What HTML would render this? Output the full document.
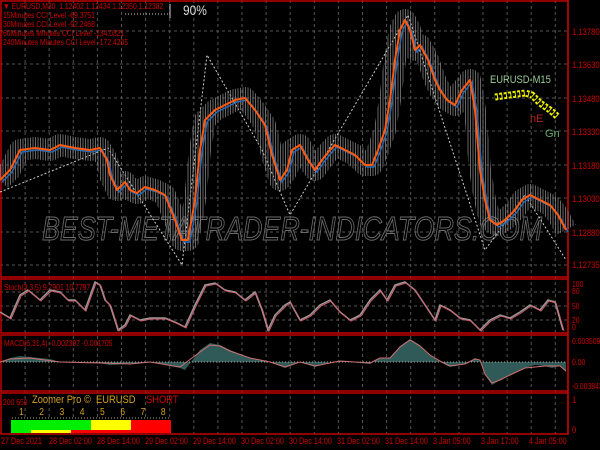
<!DOCTYPE html>
<html><head><style>
body{margin:0;width:600px;height:450px;background:#000;overflow:hidden;font-family:"Liberation Sans",sans-serif;position:relative}
.t{position:absolute;white-space:nowrap;font-size:9px;line-height:9px;transform:scaleX(.85);transform-origin:left top}
.r{color:#d00000}
.ax{position:absolute;left:572px;font-size:9px;color:#d00000;transform:scaleX(.85);transform-origin:left top;white-space:nowrap}
.tm{position:absolute;top:436px;font-size:9px;color:#d00000;white-space:nowrap;transform:scaleX(.8);transform-origin:left top}
</style></head><body>
<svg width="600" height="450" style="position:absolute;left:0;top:0">
<defs>
<pattern id="g" x="0.5" y="0" width="24.1" height="450" patternUnits="userSpaceOnUse">
<line x1="0.5" y1="0" x2="0.5" y2="450" stroke="#555" stroke-dasharray="3,3"/>
</pattern>
<pattern id="vp" x="0" y="0" width="2.5" height="10" patternUnits="userSpaceOnUse">
<rect x="0" y="0" width="1" height="10" fill="#888"/>
</pattern>
</defs>
<rect x="0" y="0" width="568" height="434" fill="url(#g)"/>
<g stroke="#555" stroke-dasharray="3,3">
<line x1="0" x2="568" y1="31" y2="31"/><line x1="0" x2="568" y1="64" y2="64"/>
<line x1="0" x2="568" y1="98" y2="98"/><line x1="0" x2="568" y1="131" y2="131"/>
<line x1="0" x2="568" y1="165" y2="165"/><line x1="0" x2="568" y1="198" y2="198"/>
<line x1="0" x2="568" y1="232" y2="232"/><line x1="0" x2="568" y1="265" y2="265"/>
<line x1="0" x2="568" y1="292" y2="292"/><line x1="0" x2="568" y1="306" y2="306"/><line x1="0" x2="568" y1="320" y2="320"/>
</g>
<g stroke="#c00000" stroke-width="1.5" fill="none">
<rect x="1" y="1" width="567" height="276"/>
<rect x="1" y="279" width="567" height="54"/>
<rect x="1" y="335" width="567" height="56"/>
<rect x="1" y="393" width="567" height="41"/>
<line x1="568" y1="0" x2="568" y2="434"/>
</g>
<text x="42" y="240" font-family="Liberation Sans" font-style="italic" font-size="33" fill="none" stroke="#6a6a6a" stroke-width="1" textLength="500" lengthAdjust="spacingAndGlyphs">BEST-METATRADER-INDICATORS.COM</text>
<polyline fill="none" stroke="#ccc" stroke-dasharray="2,2" points="0,192 108,148 182,265 207,55 262,150 290,215 408,15 485,250 525,195 566,260"/>
<polyline fill="none" stroke="url(#vp)" stroke-width="22" stroke-linejoin="round" opacity="0.75" points="0,180 10,170 20,150 35,148 50,150 60,145 75,148 90,150 100,148 107,160 110,175 117,190 125,182 130,190 137,193 145,187 155,190 165,195 175,220 182,240 188,240 195,200 200,150 205,120 215,110 225,105 235,100 245,98 255,110 265,125 272,155 280,180 287,170 292,150 300,145 308,160 315,170 322,160 330,150 335,145 345,150 355,155 365,165 372,165 378,150 385,130 390,100 395,60 400,30 405,20 410,30 415,50 420,45 428,60 435,80 440,90 447,100 455,105 462,90 470,80 475,110 480,170 485,200 490,220 497,225 505,220 515,210 522,200 530,195 540,200 550,205 558,215 566,230"/>
<polyline fill="none" stroke="#2a6ab0" stroke-width="1.5" transform="translate(2,2)" points="0,180 10,170 20,150 35,148 50,150 60,145 75,148 90,150 100,148 107,160 110,175 117,190 125,182 130,190 137,193 145,187 155,190 165,195 175,220 182,240 188,240 195,200 200,150 205,120 215,110 225,105 235,100 245,98 255,110 265,125 272,155 280,180 287,170 292,150 300,145 308,160 315,170 322,160 330,150 335,145 345,150 355,155 365,165 372,165 378,150 385,130 390,100 395,60 400,30 405,20 410,30 415,50 420,45 428,60 435,80 440,90 447,100 455,105 462,90 470,80 475,110 480,170 485,200 490,220 497,225 505,220 515,210 522,200 530,195 540,200 550,205 558,215 566,230"/>
<polyline fill="none" stroke="#ff5a10" stroke-width="2" stroke-linejoin="round" points="0,180 10,170 20,150 35,148 50,150 60,145 75,148 90,150 100,148 107,160 110,175 117,190 125,182 130,190 137,193 145,187 155,190 165,195 175,220 182,240 188,240 195,200 200,150 205,120 215,110 225,105 235,100 245,98 255,110 265,125 272,155 280,180 287,170 292,150 300,145 308,160 315,170 322,160 330,150 335,145 345,150 355,155 365,165 372,165 378,150 385,130 390,100 395,60 400,30 405,20 410,30 415,50 420,45 428,60 435,80 440,90 447,100 455,105 462,90 470,80 475,110 480,170 485,200 490,220 497,225 505,220 515,210 522,200 530,195 540,200 550,205 558,215 566,230"/>
<polyline fill="none" stroke="#ee0" stroke-width="7" stroke-dasharray="3,1.5" points="495,97 510,95 525,93 532,95 540,103 550,110 558,117"/>
<polyline fill="none" stroke="#000" stroke-width="3" stroke-dasharray="2,2.5" points="495,97 510,95 525,93 532,95 540,103 550,110 558,117"/>
<text x="530" y="122" font-size="11" fill="#b02020">nE</text>
<text x="545" y="137" font-size="11" fill="#6a6">Gn</text>
<line x1="125" y1="14" x2="168" y2="14" stroke="#ccc" stroke-dasharray="1,2"/>
<line x1="170" y1="4" x2="170" y2="18" stroke="#ccc"/>
<polyline fill="none" stroke="#999" stroke-width="1.5" points="0,312 10,318 20,295 28,290 40,300 50,290 60,292 68,300 75,300 85,310 95,282 100,285 105,300 110,305 118,330 125,325 130,315 140,320 150,318 165,318 175,322 185,327 195,305 205,285 215,283 225,290 235,292 245,300 255,292 262,310 268,330 275,315 285,305 290,302 300,320 310,315 320,305 330,300 340,312 350,320 360,315 370,300 380,290 387,300 395,285 405,282 415,290 425,305 435,320 440,305 450,310 460,318 470,320 480,330 490,320 500,315 510,318 520,312 530,305 540,310 548,300 555,302 563,330"/>
<polyline fill="none" stroke="#d06070" stroke-width="1" transform="translate(1,1)" points="0,312 10,318 20,295 28,290 40,300 50,290 60,292 68,300 75,300 85,310 95,282 100,285 105,300 110,305 118,330 125,325 130,315 140,320 150,318 165,318 175,322 185,327 195,305 205,285 215,283 225,290 235,292 245,300 255,292 262,310 268,330 275,315 285,305 290,302 300,320 310,315 320,305 330,300 340,312 350,320 360,315 370,300 380,290 387,300 395,285 405,282 415,290 425,305 435,320 440,305 450,310 460,318 470,320 480,330 490,320 500,315 510,318 520,312 530,305 540,310 548,300 555,302 563,330"/>
<polygon fill="#2f5a58" points="0,362 10,358 20,356 30,357 50,359 60,362 70,362 100,363 110,365 130,364 150,362 180,368 185,370 200,350 210,343 220,345 230,350 250,358 270,362 285,368 300,362 315,367 330,362 340,361 370,364 380,358 390,358 400,346 410,339 420,345 430,355 440,362 450,367 465,364 475,358 480,360 485,375 492,385 500,380 510,375 525,368 535,365 545,366 552,368 560,366 566,372 566,362"/>
<line x1="0" y1="362" x2="566" y2="362" stroke="#aaa" stroke-dasharray="1,2"/>
<polyline fill="none" stroke="#d07070" stroke-width="1" points="0,362 10,359 30,358 60,362 100,363 130,364 150,362 180,367 200,352 210,345 220,346 230,351 250,358 270,362 285,367 300,362 315,366 340,361 370,363 380,358 390,358 400,347 410,340 420,346 430,355 440,361 450,366 465,364 475,359 480,360 485,374 492,383 500,380 510,375 525,368 545,366 560,366 566,371"/>
<line x1="12" y1="418" x2="170" y2="418" stroke="#aa8" stroke-dasharray="1,2"/>
<rect x="11" y="420" width="80" height="10" fill="#00ee00"/>
<rect x="91" y="420" width="40" height="10" fill="#ffff00"/>
<rect x="131" y="420" width="40" height="10" fill="#ff0000"/>
<rect x="11" y="430" width="20" height="3" fill="#00ee00"/>
<rect x="31" y="430" width="40" height="3" fill="#ffff00"/>
<rect x="71" y="430" width="100" height="3" fill="#ff0000"/>
</svg>

<div class="t r" style="left:3px;top:2px;font-size:8px">&#9660; EURUSD,M30&nbsp; 1.12402 1.12434 1.12350 1.12382</div>
<div class="t r" style="left:3px;top:11px;font-size:8px">15Minutes CCI Level -69.3751</div>
<div class="t r" style="left:3px;top:20px;font-size:8px">30Minutes CCI Level -92.2468</div>
<div class="t r" style="left:3px;top:29px;font-size:8px">60Minutes Minutes CCI Level -134.0321</div>
<div class="t r" style="left:3px;top:38px;font-size:8px">240Minutes Minutes CCI Level -172.4205</div>
<div class="t" style="left:183px;top:3px;font-size:14px;line-height:14px;color:#ddd">90%</div>
<div class="t" style="left:490px;top:75px;font-size:11px;line-height:11px;color:#9c9">EURUSD-M15</div>
<div class="t r" style="left:4px;top:283px;font-size:8px">Stoch(3,3,5) 9.7901 10.7797</div>
<div class="t r" style="left:4px;top:339px;font-size:8px">MACD(6,31,4) -0.002397 -0.001705</div>
<div class="t r" style="left:3px;top:398px;font-size:8px">200 650</div>
<div class="t" style="left:32px;top:396px;font-size:11px;color:#d4a020">Zoomer Pro ©</div>
<div class="t" style="left:96px;top:396px;font-size:11px;color:#d4a020">EURUSD</div>
<div class="t" style="left:146px;top:396px;font-size:11px;color:#d00000">SHORT</div>
<div class="t" style="left:19px;top:408px;font-size:10px;color:#d4a020;word-spacing:15.5px">1 2 3 4 5 6 7 8</div>

<div class="ax" style="top:27px">1.13780</div>
<div class="ax" style="top:60px">1.13630</div>
<div class="ax" style="top:94px">1.13480</div>
<div class="ax" style="top:127px">1.13330</div>
<div class="ax" style="top:161px">1.13180</div>
<div class="ax" style="top:194px">1.13030</div>
<div class="ax" style="top:228px">1.12880</div>
<div class="ax" style="top:260px">1.12735</div>
<div class="ax" style="top:280px;font-size:8px">100</div>
<div class="ax" style="top:287px;font-size:8px">80</div>
<div class="ax" style="top:302px;font-size:8px">50</div>
<div class="ax" style="top:316px;font-size:8px">20</div>
<div class="ax" style="top:323px;font-size:8px">0</div>
<div class="ax" style="top:337px;font-size:8px">0.003509</div>
<div class="ax" style="top:358px;font-size:8px">0.00</div>
<div class="ax" style="top:382px;font-size:8px">-0.003843</div>
<div class="ax" style="top:395px">1</div>
<div class="ax" style="top:425px">0</div>

<div class="tm" style="left:1px">27 Dec 2021</div>
<div class="tm" style="left:49px">28 Dec 02:00</div>
<div class="tm" style="left:97px">28 Dec 14:00</div>
<div class="tm" style="left:145px">29 Dec 02:00</div>
<div class="tm" style="left:193px">29 Dec 14:00</div>
<div class="tm" style="left:241px">30 Dec 02:00</div>
<div class="tm" style="left:289px">30 Dec 14:00</div>
<div class="tm" style="left:337px">31 Dec 02:00</div>
<div class="tm" style="left:385px">31 Dec 14:00</div>
<div class="tm" style="left:433px">3 Jan 05:00</div>
<div class="tm" style="left:481px">3 Jan 17:00</div>
<div class="tm" style="left:529px">4 Jan 05:00</div>
</body></html>
